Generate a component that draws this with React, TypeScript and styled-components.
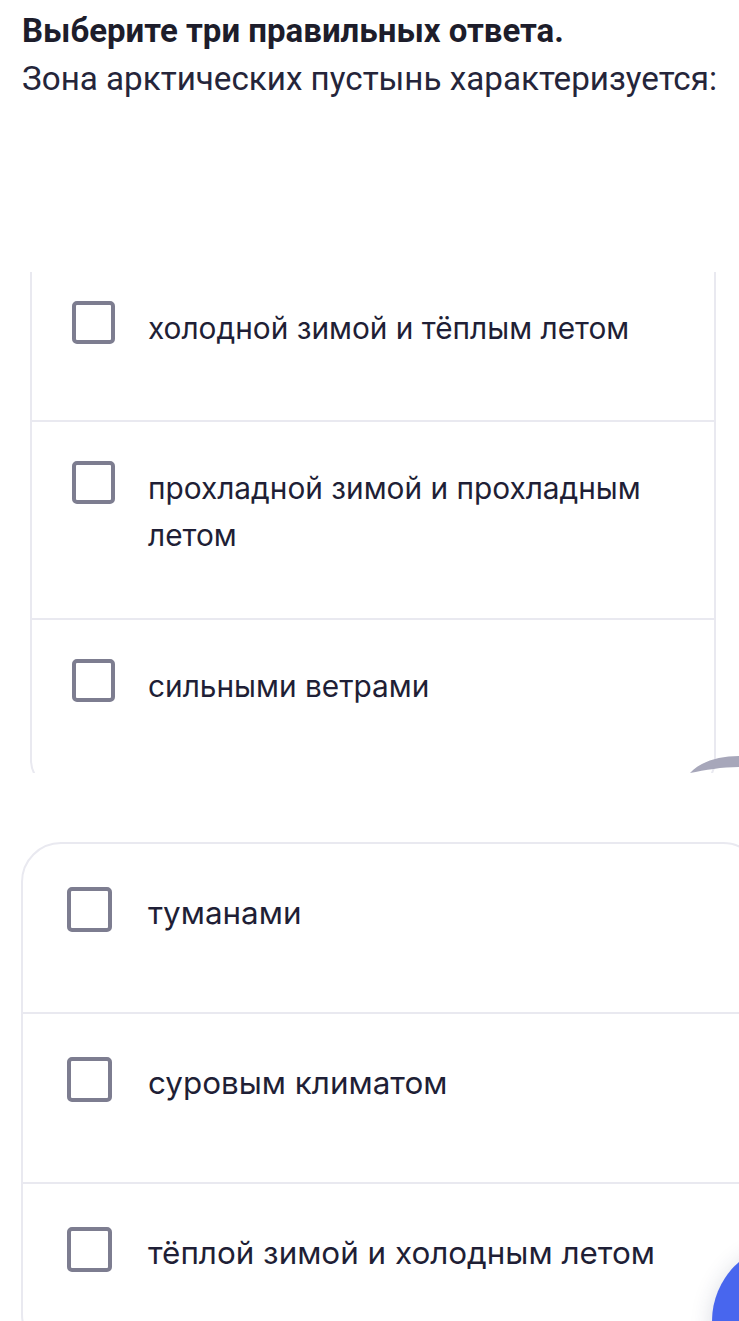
import styled, { createGlobalStyle } from 'styled-components';

const GlobalStyle = createGlobalStyle`
  html, body {
    margin: 0;
    padding: 0;
    background: #ffffff;
  }
  body {
    font-family: Inter, 'Noto Sans', sans-serif;
    overflow: hidden;
  }
`;

const Page = styled.div`
  position: relative;
  width: 739px;
  height: 1321px;
  overflow: hidden;
  background: #ffffff;
`;

const Header = styled.header`
  padding: 10px 22px 0;
`;

const Title = styled.h1`
  margin: 0;
  font-family: Roboto, 'Liberation Sans', sans-serif;
  font-weight: 700;
  font-size: 33px;
  line-height: 42px;
  color: #1d1d2b;
`;

const Question = styled.p`
  margin: 6px 0 0;
  font-family: Roboto, 'Liberation Sans', sans-serif;
  font-weight: 400;
  font-size: 33.2px;
  line-height: 42px;
  color: #25253a;
`;

// the first list is scrolled: its top edge is hidden under the header area
const ScrollClip = styled.div`
  margin: 172px 0 0 30px;
  width: 686px;
  height: 501px;
  overflow: hidden;
`;

const Card = styled.div<{ $radius: number; $offset: number; $width: number; $left: number; $padTop?: number }>`
  box-sizing: border-box;
  width: ${({ $width }) => $width}px;
  margin: ${({ $offset }) => $offset}px 0 0 ${({ $left }) => $left}px;
  padding-top: ${({ $padTop }) => $padTop ?? 0}px;
  border: 2px solid #e9e9f0;
  border-radius: ${({ $radius }) => $radius}px;
  background: #ffffff;
`;

const Row = styled.label<{ $big?: boolean }>`
  box-sizing: border-box;
  display: flex;
  align-items: flex-start;
  gap: ${({ $big }) => ($big ? 36 : 33)}px;
  min-height: ${({ $big }) => ($big ? 168 : 158)}px;
  padding: ${({ $big }) => ($big ? '43px 30px 40px 44px' : '39px 40px 59px 40px')};
  cursor: pointer;

  & + & {
    border-top: 2px solid #e9e9f0;
    min-height: ${({ $big }) => ($big ? 170 : 160)}px;
  }
`;

const Box = styled.span<{ $big?: boolean }>`
  box-sizing: border-box;
  flex: none;
  width: ${({ $big }) => ($big ? 45 : 43)}px;
  height: ${({ $big }) => ($big ? 45 : 43)}px;
  border: 4px solid #7d7d90;
  border-radius: 5px;
  background: #ffffff;
`;

const Answer = styled.span<{ $big?: boolean }>`
  font-family: Inter, 'Noto Sans', sans-serif;
  font-size: ${({ $big }) => ($big ? 31.4 : 29.8)}px;
  line-height: ${({ $big }) => ($big ? 46 : 47)}px;
  color: #1f1f36;
  margin-top: ${({ $big }) => ($big ? 3 : 4)}px;
`;

const SecondList = styled.div`
  margin-top: 69px;
`;

const SpinnerArc = styled.svg`
  position: absolute;
  left: 686px;
  top: 750px;
`;

const Fab = styled.div`
  position: absolute;
  left: 712px;
  top: 1243px;
  width: 156px;
  height: 156px;
  border-radius: 50%;
  background: #4866ee;
  box-shadow: 0 4px 22px rgba(40, 50, 90, 0.18);
`;

const firstAnswers = [
  'холодной зимой и тёплым летом',
  'прохладной зимой и прохладным летом',
  'сильными ветрами',
];

const secondAnswers = ['туманами', 'суровым климатом', 'тёплой зимой и холодным летом'];

const App = () => {
  return (
    <Page>
      <GlobalStyle />
      <Header>
        <Title>Выберите три правильных ответа.</Title>
        <Question>Зона арктических пустынь характеризуется:</Question>
      </Header>

      <ScrollClip>
        <Card $radius={30} $offset={-42} $padTop={30} $width={686} $left={0}>
          {firstAnswers.map((a) => (
            <Row key={a}>
              <Box />
              <Answer>{a}</Answer>
            </Row>
          ))}
        </Card>
      </ScrollClip>

      <SecondList>
        <Card $radius={40} $offset={0} $width={742} $left={21}>
          {secondAnswers.map((a) => (
            <Row key={a} $big>
              <Box $big />
              <Answer $big>{a}</Answer>
            </Row>
          ))}
        </Card>
      </SecondList>

      <SpinnerArc width="53" height="26" viewBox="686 750 53 26">
        <path d="M690 773 C700 762 718 756 739 756 L739 767 C722 767 705 770 690 773 Z" fill="#a7a7ba" />
      </SpinnerArc>
      <Fab />
    </Page>
  );
};

export default App;
